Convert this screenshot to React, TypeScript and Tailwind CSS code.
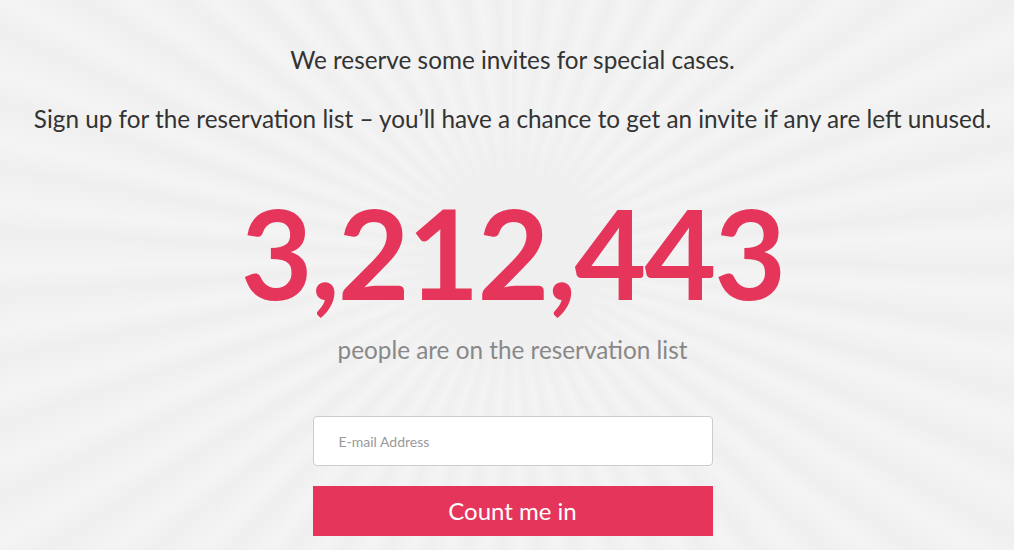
export default function App() {
  return (
    <div
      className="relative w-[1014px] h-[550px] overflow-hidden bg-[#efefef]"
      style={{ fontFamily: "Lato, 'Open Sans', sans-serif" }}
    >
      <div className="absolute inset-0 bg-[repeating-conic-gradient(from_0deg_at_50.5%_47%,#efefef_0deg,#f4f4f4_3deg,#efefef_7deg)]" />
      <div className="absolute inset-0 bg-[radial-gradient(circle_at_50.5%_47%,#efefef_0px,#efefef_70px,rgba(239,239,239,0)_140px)]" />
      <div className="relative flex flex-col items-center pl-[11px]">
        <p className="mt-[45px] text-[24.3px] leading-[30px] text-[#333]">We reserve some invites for special cases.</p>
        <p className="mt-[29px] text-[24.3px] leading-[30px] text-[#333] whitespace-nowrap">
          Sign up for the reservation list – you’ll have a chance to get an invite if any are left unused.
        </p>
        <div className="mt-[56px] text-[124px] leading-[124px] font-bold text-[#e5355a] tracking-[-2px]">3,212,443</div>
        <p className="mt-[21px] text-[24.3px] leading-[30px] text-[#888]">people are on the reservation list</p>
        <input
          className="mt-[51px] w-[400px] h-[50px] rounded-[4px] border border-[#ccc] bg-white px-[25px] text-[14px] text-[#333] placeholder:text-[#999] outline-none"
          placeholder="E-mail Address"
        />
        <button className="mt-[20px] w-[400px] h-[50px] bg-[#e5355a] text-white text-[24px]">Count me in</button>
      </div>
    </div>
  );
}
